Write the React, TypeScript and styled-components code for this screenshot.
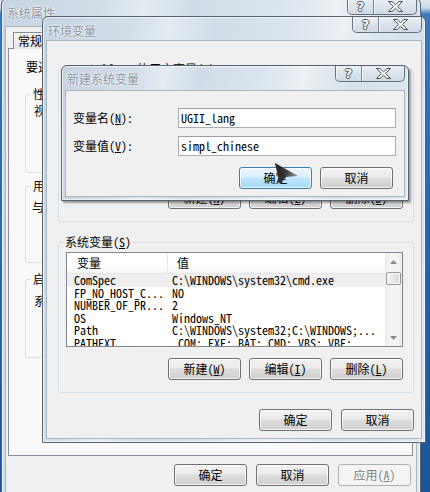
import React from 'react';
import styled, { createGlobalStyle } from 'styled-components';

const MONO = `"Noto Sans Mono CJK SC", "Noto Sans CJK SC", "DejaVu Sans Mono", monospace`;
const UI = `"Noto Sans CJK SC", "Noto Sans", sans-serif`;

const Global = createGlobalStyle`
  html, body { margin: 0; padding: 0; }
  body {
    width: 430px; height: 492px; overflow: hidden;
    font-family: ${MONO};
    font-size: 12px;
    color: #000;
  }
  #root { width: 430px; height: 492px; }
`;

const FRAME_BG = `linear-gradient(100deg, #c6d4e1 0%, #d3dee8 20%, #e5ecf2 28%, #d0dce7 38%, #dce5ee 55%, #ebf0f5 66%, #d5e0e9 80%, #e0e8ef 100%)`;

const Desktop = styled.div`
  position: relative;
  width: 430px;
  height: 492px;
  overflow: hidden;
  background: linear-gradient(180deg, #dfe7ef 0px, #c9d7e4 8px, #3c7abf 14px, #2666ad 45%, #1c5496 100%);
`;

const Win = styled.div<{ $x: number; $y: number; $w: number; $h: number; $shadow?: boolean }>`
  position: absolute;
  isolation: isolate;
  left: ${p => p.$x}px;
  top: ${p => p.$y}px;
  width: ${p => p.$w}px;
  height: ${p => p.$h}px;
  box-sizing: border-box;
  display: flex;
  flex-direction: column;
  padding: 0 3px 3px;
  border: 1px solid #56626e;
  border-radius: 6px 6px 0 0;
  background: ${FRAME_BG};
  box-shadow: inset 0 0 0 1px rgba(255, 255, 255, 0.6)${p => (p.$shadow ? ', 2px 2px 2px rgba(0,0,0,0.35)' : '')};
`;

const TitleBar = styled.div<{ $h: number }>`
  height: ${p => p.$h}px;
  flex: none;
  display: flex;
  justify-content: space-between;
  align-items: flex-start;
`;

const TitleText = styled.div<{ $top: number }>`
  margin: ${p => p.$top}px 0 0 2px;
  font: 12px/16px ${UI};
  color: #8a95a1;
  text-shadow: 0 0 3px #fff, 0 0 2px #fff;
  white-space: nowrap;
`;

const CapGroup = styled.div`
  display: flex;
  height: 16px;
  box-sizing: border-box;
  border: 1px solid #65717d;
  border-top: none;
  border-radius: 0 0 5px 5px;
  overflow: hidden;
  background: linear-gradient(180deg, #e9eff4 0%, #dbe4ec 50%, #d0dae4 100%);
`;

const CapBtn = styled.div<{ $w: number; $sep?: boolean }>`
  width: ${p => p.$w}px;
  height: 100%;
  display: flex;
  align-items: center;
  justify-content: center;
  border-left: ${p => (p.$sep ? '1px solid #7d8995' : 'none')};
  box-shadow: inset 1px 0 0 rgba(255, 255, 255, 0.7);
`;

const QGlyph = styled.span`
  font: bold 13px/14px "DejaVu Sans", sans-serif;
  color: #fff;
  text-shadow: 1px 0 0 #46515c, -1px 0 0 #46515c, 0 1px 0 #46515c, 0 -1px 0 #46515c;
`;

const CaptionButtons = () => (
  <CapGroup>
    <CapBtn $w={25}>
      <QGlyph>?</QGlyph>
    </CapBtn>
    <CapBtn $w={42} $sep>
      <svg width="15" height="11" viewBox="0 0 15 11">
        <polygon
          points="0.5,0.5 4,0.5 7.5,3.8 11,0.5 14.5,0.5 9.6,5.5 14.5,10.5 11,10.5 7.5,7.2 4,10.5 0.5,10.5 5.4,5.5"
          fill="#fff"
          stroke="#46515c"
          strokeWidth="1"
          strokeLinejoin="round"
        />
      </svg>
    </CapBtn>
  </CapGroup>
);

const Client = styled.div<{ $pad: string }>`
  flex: 1;
  min-height: 0;
  display: flex;
  flex-direction: column;
  background: #f0f0f0;
  border: 1px solid #a9b5c1;
  padding: ${p => p.$pad};
  overflow: hidden;
`;

/* ---------- tab control ---------- */
const TabStrip = styled.div`
  display: flex;
  height: 16px;
  padding-left: 5px;
  flex: none;
  position: relative;
  z-index: 1;
`;

const Tab = styled.div`
  height: 17px;
  box-sizing: border-box;
  padding: 0 4px;
  border: 1px solid #898c95;
  border-right: none;
  border-bottom: none;
  background: linear-gradient(180deg, #f6f6f6, #e6e6e6);
  font: 12px/16px ${UI};
  white-space: nowrap;
  &:last-child { border-right: 1px solid #898c95; }
`;

const TabPage = styled.div`
  height: 408px;
  box-sizing: border-box;
  border: 1px solid #898c95;
  background: #f9f9f9;
  padding: 11px 0 0 16px;
  display: flex;
  flex-direction: column;
`;

const TextLine = styled.div<{ $mt?: number; $ml?: number }>`
  font: 12px/14px ${UI};
  margin-top: ${p => p.$mt ?? 0}px;
  margin-left: ${p => p.$ml ?? 0}px;
  white-space: nowrap;
`;

const PageGroup = styled.fieldset<{ $h: number; $mt: number }>`
  margin: ${p => p.$mt}px 0 0 0;
  height: ${p => p.$h}px;
  width: 370px;
  box-sizing: border-box;
  border: 1px solid #d5dfe5;
  border-radius: 3px;
  padding: 0 8px;
  min-inline-size: 0;
`;

const Legend = styled.legend`
  font: 12px/14px ${UI};
  padding: 0 2px;
  margin-left: -3px;
  white-space: nowrap;
`;

/* ---------- buttons ---------- */
const Btn = styled.div<{ $kind?: 'default' | 'disabled' }>`
  width: 73px;
  height: 22px;
  box-sizing: border-box;
  flex: none;
  display: flex;
  align-items: center;
  justify-content: center;
  border-radius: 3px;
  font: 12px/14px ${MONO};
  white-space: nowrap;
  border: 1px solid
    ${p => (p.$kind === 'default' ? '#3c7fb1' : p.$kind === 'disabled' ? '#adb2b5' : '#707070')};
  color: ${p => (p.$kind === 'disabled' ? '#838383' : '#000')};
  background: ${p =>
    p.$kind === 'default'
      ? 'linear-gradient(180deg, #eaf6fd 0%, #d9f0fc 45%, #bee6fd 50%, #a7d9f5 100%)'
      : p.$kind === 'disabled'
      ? '#f4f4f4'
      : 'linear-gradient(180deg, #f2f2f2 0%, #ebebeb 45%, #dddddd 50%, #cfcfcf 100%)'};
  box-shadow: inset 0 0 0 1px ${p => (p.$kind === 'disabled' ? '#f4f4f4' : 'rgba(255,255,255,0.75)')};
  u { text-decoration: underline; text-underline-offset: 1px; }
`;

const BtnRow = styled.div<{ $mt: number; $gap: number; $mr?: number }>`
  display: flex;
  justify-content: flex-end;
  gap: ${p => p.$gap}px;
  margin-top: ${p => p.$mt}px;
  margin-right: ${p => p.$mr ?? 0}px;
  flex: none;
`;

/* ---------- group box in env window ---------- */
const Group = styled.fieldset<{ $mt: number }>`
  margin: ${p => p.$mt}px 0 0 0;
  box-sizing: border-box;
  border: 1px solid #d5dfe5;
  border-radius: 3px;
  padding: 0 10px 12px 7px;
  min-inline-size: 0;
  display: flex;
  flex-direction: column;
`;

const GroupLegend = styled.legend`
  font: 12px/14px ${MONO};
  padding: 0 2px;
  margin-left: -3px;
  white-space: nowrap;
`;

/* ---------- list view ---------- */
const ListBox = styled.div<{ $h: number }>`
  height: ${p => p.$h}px;
  margin-top: 3px;
  box-sizing: border-box;
  border: 1px solid #828790;
  background: #fff;
  display: flex;
  overflow: hidden;
  flex: none;
`;

const ListMain = styled.div`
  flex: 1;
  min-width: 0;
  display: flex;
  flex-direction: column;
  overflow: hidden;
`;

const Header = styled.div`
  height: 21px;
  box-sizing: border-box;
  flex: none;
  display: grid;
  grid-template-columns: 101px 1fr;
  border-bottom: 1px solid #e5e5e5;
  background: linear-gradient(180deg, #ffffff 0%, #ffffff 55%, #f5f6f7 100%);
`;

const HeadCell = styled.div<{ $pad: number; $div?: boolean }>`
  padding-left: ${p => p.$pad}px;
  font: 12px/20px ${UI};
  border-right: ${p => (p.$div ? '1px solid #e3e8ee' : 'none')};
`;

const Row = styled.div<{ $sel?: boolean }>`
  display: grid;
  grid-template-columns: 101px 1fr;
  height: 12.5px;
  line-height: 12.5px;
  flex: none;
  background: ${p => (p.$sel ? '#eeeeee' : 'transparent')};
  white-space: nowrap;
  font-family: ${MONO};
  font-size: 12px;
`;

const Cell = styled.div<{ $pad: number }>`
  padding-left: ${p => p.$pad}px;
  min-width: 0;
`;

const Scroll = styled.div`
  width: 17px;
  flex: none;
  display: flex;
  flex-direction: column;
  background: linear-gradient(90deg, #e9e9e9 0%, #f4f4f4 25%, #f4f4f4 75%, #e9e9e9 100%);
`;

const Arrow = styled.div`
  height: 17px;
  flex: none;
  display: flex;
  align-items: center;
  justify-content: center;
`;

const Thumb = styled.div`
  height: 13px;
  margin: 2px 1px 0;
  box-sizing: border-box;
  border: 1px solid #979797;
  border-radius: 2px;
  background: linear-gradient(90deg, #f2f2f2 0%, #e6e6e6 50%, #d6d6d6 100%);
  box-shadow: inset 0 0 0 1px #fbfbfb;
`;

const Spacer = styled.div`
  flex: 1;
`;

type Var = [string, string];

const ListView = ({ h, rows }: { h: number; rows: Var[] }) => (
  <ListBox $h={h}>
    <ListMain>
      <Header>
        <HeadCell $pad={10} $div>变量</HeadCell>
        <HeadCell $pad={9}>值</HeadCell>
      </Header>
      {rows.map(([k, v], i) => (
        <Row key={k} $sel={i === 0}>
          <Cell $pad={7}>{k}</Cell>
          <Cell $pad={4}>{v}</Cell>
        </Row>
      ))}
    </ListMain>
    <Scroll>
      <Arrow>
        <svg width="7" height="4" viewBox="0 0 7 4">
          <polygon points="0,4 3.5,0 7,4" fill="#8c8c8c" />
        </svg>
      </Arrow>
      <Thumb />
      <Spacer />
      <Arrow>
        <svg width="7" height="4" viewBox="0 0 7 4">
          <polygon points="0,0 3.5,4 7,0" fill="#8c8c8c" />
        </svg>
      </Arrow>
    </Scroll>
  </ListBox>
);

/* ---------- new-variable dialog ---------- */
const FieldRow = styled.div<{ $mt: number }>`
  display: flex;
  align-items: center;
  margin-top: ${p => p.$mt}px;
  flex: none;
`;

const FieldLabel = styled.div`
  width: 105px;
  font: 12px/14px ${MONO};
  white-space: nowrap;
  u { text-decoration: underline; text-underline-offset: 1px; }
`;

const Input = styled.div`
  width: 218px;
  height: 20px;
  box-sizing: border-box;
  border: 1px solid #a9aeb5;
  border-top-color: #9a9fa6;
  background: #fff;
  padding-left: 2px;
  font: 12px/18px ${MONO};
  white-space: nowrap;
`;

const Cursor = styled.svg`
  position: absolute;
  left: 274px;
  top: 162px;
  filter: blur(0.4px);
`;

const userVars: Var[] = [
  ['TEMP', '%USERPROFILE%\\AppData\\Local\\Temp'],
  ['TMP', '%USERPROFILE%\\AppData\\Local\\Temp'],
];

const sysVars: Var[] = [
  ['ComSpec', 'C:\\WINDOWS\\system32\\cmd.exe'],
  ['FP_NO_HOST_C...', 'NO'],
  ['NUMBER_OF_PR...', '2'],
  ['OS', 'Windows_NT'],
  ['Path', 'C:\\WINDOWS\\system32;C:\\WINDOWS;...'],
  ['PATHEXT', '.COM;.EXE;.BAT;.CMD;.VBS;.VBE;...'],
];

export default function App() {
  return (
    <>
      <Global />
      <Desktop>
        {/* 系统属性 */}
        <Win $x={1} $y={-2} $w={420} $h={520}>
          <TitleBar $h={27}>
            <TitleText $top={6}>系统属性</TitleText>
            <CaptionButtons />
          </TitleBar>
          <Client $pad="5px 3px 0 2px">
            <TabStrip>
              <Tab>常规</Tab>
              <Tab>计算机名</Tab>
              <Tab>硬件</Tab>
              <Tab>高级</Tab>
              <Tab>系统保护</Tab>
              <Tab>远程</Tab>
            </TabStrip>
            <TabPage>
              <TextLine $ml={1}>要进行大多数更改，您必须作为管理员登录。</TextLine>
              <PageGroup $mt={13} $h={86}>
                <Legend>性能</Legend>
                <TextLine $mt={3}>视觉效果，处理器计划，内存使用，以及虚拟内存</TextLine>
              </PageGroup>
              <PageGroup $mt={6} $h={84}>
                <Legend>用户配置文件</Legend>
                <TextLine $mt={7} $ml={-2}>与您登录有关的桌面设置</TextLine>
              </PageGroup>
              <PageGroup $mt={9} $h={86}>
                <Legend>启动和故障恢复</Legend>
                <TextLine $mt={8}>系统启动、系统失败和调试信息</TextLine>
              </PageGroup>
            </TabPage>
            <BtnRow $mt={8} $gap={9} $mr={2}>
              <Btn>确定</Btn>
              <Btn>取消</Btn>
              <Btn $kind="disabled">
                应用(<u>A</u>)
              </Btn>
            </BtnRow>
          </Client>
        </Win>

        {/* 环境变量 */}
        <Win $x={42} $y={16} $w={384} $h={427}>
          <TitleBar $h={23}>
            <TitleText $top={6}>环境变量</TitleText>
            <CaptionButtons />
          </TitleBar>
          <Client $pad="21px 7px 0 11px">
            <Group $mt={0}>
              <GroupLegend>
                xuanlaifeng 的用户变量(<u>U</u>)
              </GroupLegend>
              <ListView h={97} rows={userVars} />
              <BtnRow $mt={11} $gap={8}>
                <Btn>
                  新建(<u>N</u>)
                </Btn>
                <Btn>
                  编辑(<u>E</u>)
                </Btn>
                <Btn>
                  删除(<u>D</u>)
                </Btn>
              </BtnRow>
            </Group>
            <Group $mt={13}>
              <GroupLegend>
                系统变量(<u>S</u>)
              </GroupLegend>
              <ListView h={95} rows={sysVars} />
              <BtnRow $mt={11} $gap={8}>
                <Btn>
                  新建(<u>W</u>)
                </Btn>
                <Btn>
                  编辑(<u>I</u>)
                </Btn>
                <Btn>
                  删除(<u>L</u>)
                </Btn>
              </BtnRow>
            </Group>
            <BtnRow $mt={16} $gap={9}>
              <Btn>确定</Btn>
              <Btn>取消</Btn>
            </BtnRow>
          </Client>
        </Win>

        {/* 新建系统变量 */}
        <Win $x={61} $y={65} $w={348} $h={136} $shadow>
          <TitleBar $h={24}>
            <TitleText $top={5}>新建系统变量</TitleText>
            <CaptionButtons />
          </TitleBar>
          <Client $pad="17px 8px 0 7px">
            <FieldRow $mt={0}>
              <FieldLabel>
                变量名(<u>N</u>):
              </FieldLabel>
              <Input>UGII_lang</Input>
            </FieldRow>
            <FieldRow $mt={8}>
              <FieldLabel>
                变量值(<u>V</u>):
              </FieldLabel>
              <Input>simpl_chinese</Input>
            </FieldRow>
            <BtnRow $mt={11} $gap={8} $mr={3}>
              <Btn $kind="default">确定</Btn>
              <Btn>取消</Btn>
            </BtnRow>
          </Client>
        </Win>

        <Cursor width="26" height="24" viewBox="0 0 26 24">
          <defs>
            <linearGradient id="cur" x1="0" y1="0" x2="1" y2="0.4">
              <stop offset="0" stopColor="#1e1e1e" />
              <stop offset="0.55" stopColor="#3a3a3a" />
              <stop offset="1" stopColor="#8a8a8a" />
            </linearGradient>
          </defs>
          <polygon points="1,1 24,14 12,15 6,22" fill="url(#cur)" />
          <polygon points="1,1 12,15 6,22" fill="#2a2a2a" opacity="0.6" />
        </Cursor>
      </Desktop>
    </>
  );
}
